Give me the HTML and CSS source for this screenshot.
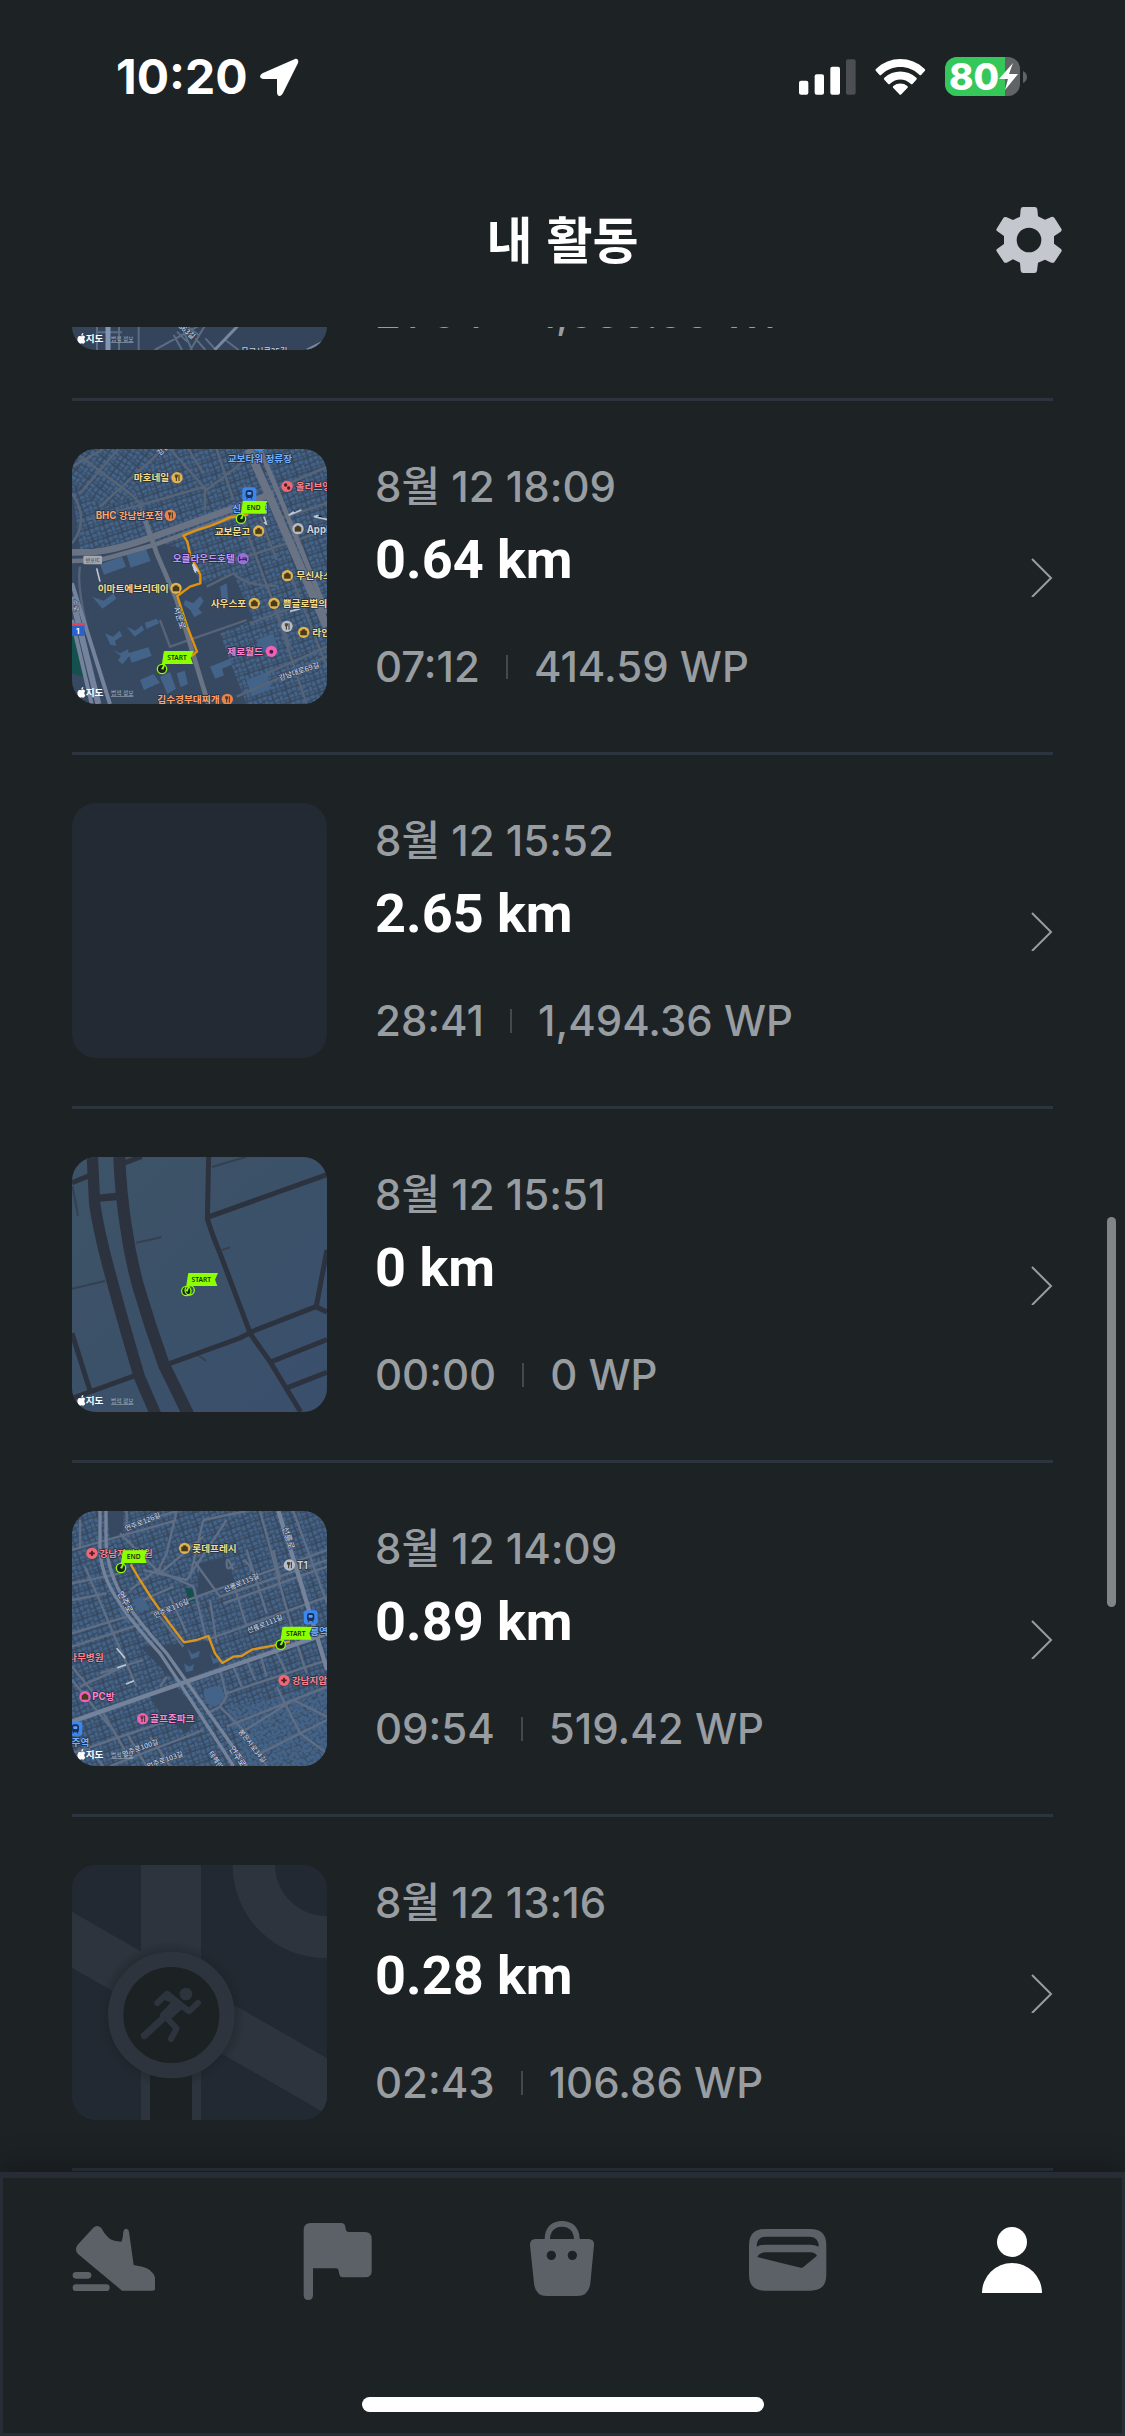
FILE: index.html
```html
<!DOCTYPE html>
<html lang="ko">
<head>
<meta charset="utf-8">
<meta name="viewport" content="width=device-width, initial-scale=1">
<title>내 활동</title>
<link rel="stylesheet" href="styles.css">
</head>
<body>
<svg class="defs" width="0" height="0" aria-hidden="true">
  <defs>
    <pattern id="blocksA" width="46" height="40" patternUnits="userSpaceOnUse" patternTransform="rotate(-18)">
      <path class="bld" d="M2 3h11v13H2zM16 2h14v10H16zM33 4h10v14H33zM3 20h14v9H3zM20 16h9v14h-9zM32 22h12v8H32zM5 32h10v6H5zM19 33h13v5H19zM36 33h7v5h-7z"/>
    </pattern>
    <pattern id="blocksB" width="46" height="40" patternUnits="userSpaceOnUse" patternTransform="rotate(38)">
      <path class="bld" d="M2 3h11v13H2zM16 2h14v10H16zM33 4h10v14H33zM3 20h14v9H3zM20 16h9v14h-9zM32 22h12v8H32zM5 32h10v6H5zM19 33h13v5H19zM36 33h7v5h-7z"/>
    </pattern>
    <linearGradient id="land" x1="0" y1="0" x2="1" y2="1"><stop offset="0" stop-color="#3d5366"/><stop offset="1" stop-color="#3a4f6c"/></linearGradient>
    <radialGradient id="halo"><stop offset="0.78" stop-color="#1b2026" stop-opacity="0.6"/><stop offset="1" stop-color="#1b2026" stop-opacity="0"/></radialGradient>
    <g id="credit">
      <path fill="#fff" d="M29 723c5-3 10 0 10 4-3 4-3 9 1 12-2 7-6 8-11 6-6 2-9 1-12-6-2-8 0-16 6-16 3 0 4 1 6 1zM28 722c0-5 2-7 6-8 0 5-2 7-6 8z"/>
      <text class="credit-name" x="41" y="741">지도</text>
      <text class="credit-legal" x="117" y="739">법적 정보</text>
    </g>
    <g id="pin">
      <path d="M8-53L0 0" stroke="#8cff00" stroke-width="5"/>
      <circle r="14" fill="#1b2124" stroke="#8cff00" stroke-width="4"/>
      <path d="M-3 0L6-15H10L4 2z" fill="#8cff00"/>
    </g>
    <g id="startpin"><use href="#pin"/><path d="M8-54H95L86-34L93-15H3z" fill="#8cff00"/><text class="pin-text" x="45" y="-27">START</text></g>
    <g id="endpin"><use href="#pin"/><path d="M8-53H79L71-34L77-15H3z" fill="#8cff00"/><text class="pin-text" x="38" y="-26">END</text></g>
    <g id="subway"><rect x="-21" y="-21" width="42" height="42" rx="9" fill="#3d86ee"/><rect x="-11" y="-13" width="22" height="24" rx="8" fill="#17325c"/><rect x="-6" y="-7" width="12" height="8" rx="2" fill="#5d9ff5"/><path d="M-8 15L-5 9M8 15L5 9" stroke="#17325c" stroke-width="3"/></g>
    <g id="food"><circle r="17"/><path d="M-5-9v6a3 3 0 0 0 6 0v-6M-2-9V10M6-9V10" fill="none" stroke="#3f3323" stroke-width="3"/></g>
    <g id="shop"><circle r="17"/><path d="M-9-4H9V8H-9zM-4-4v-4h8v4" fill="#4a3a1c" stroke="#4a3a1c" stroke-width="2"/></g>
    <g id="cross"><circle r="17" fill="#ef6874"/><path d="M0-8V8M-8 0H8" stroke="#4c1a22" stroke-width="5"/></g>
  </defs>
</svg>

<header class="status">
  <div class="status-left">
    <span class="clock">10:20</span>
    <svg width="39" height="38" viewBox="0 0 39 38" aria-label="위치"><path d="M35 1L3 15c-4 2-4 6 1 6h13v13c0 5 4 5 6 1L38 5c1-3-1-5-3-4z" fill="#fff"/></svg>
  </div>
  <div class="status-right">
    <svg width="57" height="36" viewBox="57 52 171 108" aria-label="신호"><g fill="#fff"><rect x="57" y="117" width="28" height="42" rx="6"/><rect x="104" y="98" width="28" height="61" rx="6"/><rect x="151" y="75" width="29" height="84" rx="6"/></g><rect x="198" y="53" width="29" height="106" rx="6" fill="#4b4e52"/></svg>
    <svg width="51" height="36" viewBox="285 51 153 108" aria-label="와이파이"><g fill="#fff"><path d="M288 87q-3-3 0-6c41-40 105-40 146 0q3 3 0 6l-10 11q-3 3-6 0c-32-31-82-31-114 0q-3 3-6 0z"/><path d="M313 113q-3-3 0-6c27-25 69-25 96 0q3 3 0 6l-11 12q-3 3-6 0c-18-17-44-17-62 0q-3 3-6 0z"/><path d="M340 138q-3-3 0-6c12-10 30-10 42 0q3 3 0 6l-18 19q-3 3-6 0z"/></g></svg>
    <svg width="82" height="39" viewBox="0 0 82 39" aria-label="배터리"><clipPath id="cell"><rect width="75" height="39" rx="12"/></clipPath><g clip-path="url(#cell)"><path fill="#606467" d="M0 0h75v39H0z"/><path fill="#35c759" d="M0 0h60v39H0z"/></g><path d="M78 14q4 2 4 6t-4 6z" fill="#606467"/><text class="battery" x="4" y="33">80</text><path d="M68 6L54 22h9l-3 11L73 17h-9z" fill="#fff"/></svg>
  </div>
</header>

<div class="titlebar">
  <h1>내 활동</h1>
  <button class="gear" type="button" aria-label="설정">
    <svg width="66" height="66" viewBox="48 51 198 198"><path fill="#c4c7ce" fill-rule="evenodd" d="M129 51H164Q171 51 172 58L174 79L195 89L214 81Q221 79 224 85L244 116Q247 121 242 125L222 139V161L242 176Q247 180 244 185L224 215Q221 220 214 218L195 209L174 218L171 242Q170 249 163 249H130Q123 249 122 242L120 218L99 208L80 218Q74 220 71 215L50 184Q47 179 52 176L72 162V138L52 124Q47 121 50 116L70 84Q73 79 80 82L99 90L120 80L122 58Q123 51 129 51ZM147 113A37 37 0 1 0 147 187A37 37 0 1 0 147 113Z"/></svg>
  </button>
</div>

<main class="feed">
  <ul class="list">
    <li><a class="row" href="#a1">
      <svg class="thumb" viewBox="0 0 765 765"><path fill="#33445b" d="M0 0h765v765H0z"/>
        <g fill="none" stroke="#5c6c82" stroke-width="6"><path d="M75 690V765M200 690V765M141 695V765M78 712H150M248 765L385 690M305 720L330 765M315 710L345 740M335 710L360 765M340 690L380 720M355 765L400 690M370 730L400 765M400 730L432 765M460 735L500 765"/></g>
        <path d="M108 690V765" stroke="#8196b4" stroke-width="15"/><path d="M428 765L500 690M705 765L765 735" stroke="#7687a0" stroke-width="9"/>
        <text class="road" font-size="22" transform="translate(318 695) rotate(42)">363길</text><text class="road" font-size="24" x="508" y="778">무교서로35길</text>
        <use href="#credit"/></svg>
      <div class="info"><p class="date">8<span class="unit">월</span> 12 18:30</p><p class="dist">2.74 km</p><p class="stats"><span>21:54</span><i></i><span>1,536.80 WP</span></p></div>
      <svg class="chev" viewBox="0 0 22 40"><path d="M1 2L20 21L1 40"/></svg></a></li>

    <li><a class="row" href="#a2">
      <svg class="thumb" viewBox="36 27 765 765">
        <path fill="#374960" d="M36 27h765v765H36z"/>
        <path fill="url(#blocksB)" d="M36 27H320L215 170L130 200L36 130z"/>
        <path fill="url(#blocksA)" d="M320 27H801V792H560L470 560L380 330L270 300L60 330L36 130L130 200L215 170z"/>
        <path fill="#374960" d="M60 400L270 310L330 480L400 600L450 792H150L100 600zM400 440L520 400L580 540L430 600z"/>
        <g class="bld"><path d="M120 372l66-22 12 30-66 24zM200 345l58-18 14 36-60 20zM97 470l34 12 30-22 8 16-42 30zM200 560l26 12 20-16 6 14-28 20zM135 580l24 10 20-18 8 16-22 14 4 16-18-4zM205 640l60-18 10 26-60 20zM160 630l20 10 24-12 4 20-20 24-14-10 8-14zM254 548l36-12 8 14-38 16zM375 480l24 10 22-22 10 16-16 22 12 12-24 14-12-22-20-16zM480 440l20-10 6 60-20-8zM450 680l60-24 6 18-30 12 6 20-26 10zM300 710l30-14 18 50-26 16zM350 700l24-8 10 40-22 10zM240 720l40-18 20 26-48 22zM590 600l50-20 12 40-50 20zM560 720l60-24 14 50-60 24z"/></g>
        <path fill="#14504e" d="M36 585L52 600L84 715L36 700z"/>
        <g fill="none" stroke="#566478" stroke-width="7"><path d="M36 80L130 27M36 30L215 165M60 160L175 27M120 200L310 27M215 165L240 190L270 300M80 240L435 140M330 27L440 150L600 27M435 140V210M385 27L430 100M470 27L520 180M620 160L801 80M650 240L801 190M560 350L800 270M440 440L520 400Q560 440 650 437M550 250L690 620M600 230L650 360M620 700L801 620M530 770L801 650M570 550L760 480M620 430L740 792M690 400L801 680M60 380Q50 430 80 560M300 540L330 620L560 540M36 310Q90 240 36 160"/></g>
        <g fill="none" stroke="#697383"><path stroke-width="20" d="M36 337L100 336Q170 330 280 290L520 205L640 160"/><path stroke-width="14" d="M36 363L120 360Q160 350 290 312L560 215"/><path stroke-width="14" d="M245 210L290 340L350 480L445 792"/><path stroke-width="24" d="M565 27L625 160L800 560"/><path stroke-width="14" d="M600 27L655 160L801 520"/></g>
        <g fill="none" stroke="#74829c"><path stroke-width="18" d="M36 470L115 792"/><path stroke-width="12" d="M36 540L95 792M36 430L150 792"/></g>
        <g stroke="#bcc4d0" stroke-width="5"><path d="M724 210L686 226L701 215M801 238L762 230L776 226M110 385L120 425M612 230L620 254L612 246M690 514L720 506"/></g>
        <path d="M565 224Q530 230 510 232L480 246L450 258L410 270L370 287L382 305L392 350L412 385L421 405V430L390 440L352 468L364 505L382 560L411 635L392 650" fill="none" stroke="#e3920c" stroke-width="7" stroke-linejoin="round"/>
        <path d="M400 372l13 20-10-2 4 8-9-23z" fill="#c7cfdd" stroke="#c7cfdd" stroke-width="4"/>
        <g fill="#e0b44e"><use href="#food" x="351" y="113"/><use href="#shop" x="596" y="273"/><use href="#shop" x="348" y="445"/><use href="#shop" x="682" y="407"/><use href="#shop" x="583" y="490"/><use href="#shop" x="642" y="490"/><use href="#shop" x="731" y="577"/></g>
        <g fill="#e8834b"><use href="#food" x="331" y="226"/><use href="#food" x="502" y="778"/></g>
        <g fill="#b8bec8"><use href="#shop" x="714" y="266"/><use href="#food" x="681" y="559"/></g>
        <circle cx="681" cy="139" r="17" fill="#ef6874"/><circle cx="677" cy="135" r="5" fill="#4c1a22"/><circle cx="686" cy="144" r="5" fill="#4c1a22"/>
        <circle cx="634" cy="634" r="17" fill="#f25fb4"/><circle cx="634" cy="635" r="6" fill="#4c1a3c"/>
        <circle cx="549" cy="356" r="17" fill="#9c6fd8"/><path d="M539 349v14m0-4h20v4m0-4v-5h-12" fill="none" stroke="#2c1a4c" stroke-width="3"/>
        <use href="#subway" x="568" y="163"/><path fill="#3d86ee" d="M580 27h34q-4 6-17 6t-17-6z"/>
        <rect x="70" y="347" width="56" height="26" rx="4" fill="#a3a8ae"/><text class="sign" x="98" y="365">반포IC</text>
        <path d="M36 551h38v30q0 7-8 7H36z" fill="#2c62c8"/><path d="M36 549h38v8H36z" fill="#d8475a"/><text class="shield" x="53" y="583">1</text>
        <g class="lbl">
          <text class="c-blue" x="503" y="66">교보타워 정류장</text><text class="c-blue" x="517" y="217">신논현역</text>
          <text class="c-yellow" x="221" y="124">마호네일</text><text class="c-orange" x="107" y="237">BHC 강남반포점</text>
          <text class="c-red" x="707" y="151">올리브영</text><text class="c-yellow" x="464" y="284">교보문고</text><text class="c-gray" x="740" y="278">Apple</text>
          <text class="c-purple" x="338" y="366">오클라우드호텔</text><text class="c-yellow" x="709" y="418">무신사스</text>
          <text class="c-yellow" x="113" y="455">이마트에브리데이</text><text class="c-yellow" x="452" y="500">사우스포</text><text class="c-yellow" x="668" y="500">쁨글로벌의원</text>
          <text class="c-yellow" x="757" y="588">라인</text><text class="c-pink" x="502" y="644">제로월드</text><text class="c-orange" x="292" y="789">김수경부대찌개</text>
        </g>
        <text class="road" font-size="25" transform="translate(340 503) rotate(72)">서운로</text><text class="road" font-size="22" transform="translate(660 722) rotate(-19)">강남대로69길</text><text class="road" font-size="20" transform="translate(36 480) rotate(80)">수로</text><text class="road" font-size="22" transform="translate(300 48) rotate(-45)">강남</text>
        <use href="#endpin" x="543" y="236"/><use href="#startpin" x="306" y="687"/>
        <use href="#credit" x="36" y="27"/></svg>
      <div class="info"><p class="date">8<span class="unit">월</span> 12 18:09</p><p class="dist">0.64 km</p><p class="stats"><span>07:12</span><i></i><span>414.59 WP</span></p></div>
      <svg class="chev" viewBox="0 0 22 40"><path d="M1 2L20 21L1 40"/></svg></a></li>

    <li><a class="row" href="#a3">
      <div class="thumb"></div>
      <div class="info"><p class="date">8<span class="unit">월</span> 12 15:52</p><p class="dist">2.65 km</p><p class="stats"><span>28:41</span><i></i><span>1,494.36 WP</span></p></div>
      <svg class="chev" viewBox="0 0 22 40"><path d="M1 2L20 21L1 40"/></svg></a></li>

    <li><a class="row" href="#a4">
      <svg class="thumb" viewBox="36 51 765 765"><path fill="url(#land)" d="M36 51h765v765H36z"/>
        <g fill="none" stroke="#2d323f" stroke-linejoin="round">
          <path stroke-width="34" d="M97 51L104 190Q115 270 150 400Q190 550 238 710L290 830"/>
          <path stroke-width="36" d="M178 51Q182 160 198 260Q210 350 235 440Q270 560 312 675L388 830"/>
          <path stroke-width="22" d="M112 175L185 168"/>
          <path stroke-width="15" d="M446 51L442 236Q455 280 480 340L572 583L630 665L722 816M442 232L801 104M36 128L90 106M190 70L245 49M320 674L540 594L580 573L768 500L801 516M768 503L801 330M632 666L801 599M683 743L801 697M36 775L225 707M36 580L90 752"/>
          <path stroke-width="6" stroke="#35404f" d="M456 81L560 50M229 308L304 292M483 331L510 322M36 446L135 423M37 138L54 227M417 648L438 662"/>
        </g>
        <use href="#startpin" x="379" y="453"/><circle cx="389" cy="451" r="14" fill="none" stroke="#8cff00" stroke-width="4"/>
        <use href="#credit" x="36" y="51"/></svg>
      <div class="info"><p class="date">8<span class="unit">월</span> 12 15:51</p><p class="dist">0 km</p><p class="stats"><span>00:00</span><i></i><span>0 WP</span></p></div>
      <svg class="chev" viewBox="0 0 22 40"><path d="M1 2L20 21L1 40"/></svg></a></li>

    <li><a class="row" href="#a5">
      <svg class="thumb" viewBox="36 33 765 765">
        <path fill="#374960" d="M36 33h765v765H36z"/><path fill="url(#blocksA)" d="M36 33h765v765H36z"/>
        <path fill="url(#blocksB)" d="M560 798L500 620L801 560V798z"/>
        <path fill="#374960" d="M420 190L500 170L530 260L410 290zM240 440L370 430L450 420L480 500L370 540L330 530zM140 33H190V100L150 120zM270 590L350 560L420 640L380 700L300 640z"/>
        <g class="bld"><path d="M380 440l16 22 24-10-4 18-22 8zM450 460l14 18 18-14v18l-22 10zM372 490l16 10 14-8-4 20-20 4zM430 570l50-16 16 40-30 26-30-10zM216 300l30-12 24 36-30 14zM190 320l24 40-16 10-20-36z"/></g>
        <path fill="#14504e" d="M376 262L400 268L412 300L386 306z"/>
        <g fill="none" stroke="#5f6e84" stroke-width="7"><path d="M36 150L350 60M200 80L350 33L320 160L290 220M36 250L180 220M200 33V90M60 60V140M75 200L160 400L230 560M36 300L140 280M36 400L200 350M36 440L250 370M36 500L110 590M60 560L190 500M120 520L250 480M250 210L380 240L500 60M430 60L390 230M430 60L560 33M180 100L300 220L430 110M210 270L290 210L400 260L440 420M250 300L340 260M270 340L580 230L801 150M300 350L370 440M330 290L380 400M400 180L480 290L801 180M450 300L470 430M520 250L560 380M440 420L801 290M490 310L801 200M560 150L620 340M600 33L700 400L740 520M640 150L660 240M700 33L801 310M520 190Q500 220 500 190T520 210M550 180Q580 200 570 215M520 500L545 560M560 480L585 540M600 460L620 530M500 580L801 480M480 620L500 590L480 510M440 640L480 620L560 700L620 798M500 680L801 560M540 700L700 600L801 650M600 760L801 660M650 560L720 700L801 760M36 690L130 798M130 640L200 760M200 700L260 798M36 760L360 650M150 798L430 690M36 540L150 680M270 710L330 798M640 440L680 520M300 560L320 530"/></g>
        <g fill="none" stroke="#74829a"><path stroke-width="13" d="M36 665L250 590L801 400M655 33L720 240L801 510"/><path stroke-width="10" d="M120 33V120Q115 220 180 310Q210 360 300 460L360 550L520 798"/><path stroke-width="10" d="M138 33V120Q140 220 200 310Q240 370 320 460L380 545L560 798"/></g>
        <path stroke="#c0c8d4" stroke-width="5" d="M170 445L195 475M172 503L198 494M198 552L222 542"/>
        <path d="M212 193L240 240L275 295L330 372L372 427L410 420L445 408L465 460L487 489L520 470L545 468L575 449L640 437L690 424" fill="none" stroke="#dc951b" stroke-width="7" stroke-linejoin="round"/>
        <use href="#cross" x="96" y="160"/><use href="#cross" x="672" y="541"/>
        <g fill="#e0b44e"><use href="#shop" x="374" y="145"/></g><g fill="#b8bec8"><use href="#food" x="688" y="195"/></g><g fill="#f25fb4"><use href="#shop" x="75" y="590"/><use href="#food" x="248" y="656"/></g>
        <use href="#subway" x="752" y="352"/><use href="#subway" x="46" y="686"/>
        <g class="lbl"><text class="c-red" x="118" y="171">강남지성병원</text><text class="c-yellow" x="397" y="156">롯데프레시</text><text class="c-gray" x="711" y="206">T1</text><text class="c-blue" x="724" y="404">선릉역</text><text class="c-red" x="695" y="552">강남지압</text><text class="c-red" x="24" y="483">나무병원</text><text class="c-pink" x="97" y="600">PC방</text><text class="c-pink" x="270" y="666">골프존파크</text><text class="c-blue" x="8" y="738">언주역</text></g>
        <g class="road" font-size="21"><text transform="translate(198 94) rotate(-22)">언주로126길</text><text transform="translate(285 355) rotate(-24)">언주로116길</text><text transform="translate(495 277) rotate(-23)">선릉로115길</text><text transform="translate(565 400) rotate(-22)">선릉로111길</text><text transform="translate(190 770) rotate(-20)">언주로100길</text><text transform="translate(264 806) rotate(-20)">언주로103길</text><text transform="translate(534 695) rotate(52)">봉은사로34길</text><text transform="translate(445 760) rotate(56)">테헤란</text></g>
        <g class="road" font-size="25"><text transform="translate(666 84) rotate(72)">선릉로</text><text transform="translate(172 280) rotate(62)">언주로</text><text transform="translate(506 746) rotate(56)">언주로</text></g>
        <use href="#endpin" x="183" y="204"/><use href="#startpin" x="662" y="434"/>
        <use href="#credit" x="36" y="33"/></svg>
      <div class="info"><p class="date">8<span class="unit">월</span> 12 14:09</p><p class="dist">0.89 km</p><p class="stats"><span>09:54</span><i></i><span>519.42 WP</span></p></div>
      <svg class="chev" viewBox="0 0 22 40"><path d="M1 2L20 21L1 40"/></svg></a></li>

    <li><a class="row" href="#a6">
      <svg class="thumb" viewBox="36 45 765 765"><path fill="#232932" d="M36 45h765v765H36z"/>
        <g fill="#2d343d"><path d="M243 45H423V810H243zM36 185L801 625V793L36 353z"/><path d="M518 45A278 278 0 0 0 801 324V198A155 155 0 0 1 645 45z"/></g>
        <circle cx="334" cy="495" r="222" fill="url(#halo)"/>
        <path fill="#1c2124" d="M270 640H396V810H270z"/>
        <circle cx="334" cy="495" r="167" fill="#1c2124" stroke="#2d343d" stroke-width="46"/>
        <circle cx="378" cy="432" r="19" fill="#2d343d"/>
        <g fill="none" stroke="#2d343d" stroke-linecap="round" stroke-linejoin="round"><path stroke-width="18" d="M292 459L321 431L387 484L414 459M324 508L350 535L333 567"/><path stroke-width="24" d="M342 465L312 497"/><path stroke-width="21" d="M332 484L253 557"/></g><path fill="#2d343d" d="M318 432L374 470L336 505L316 508L300 492L334 458L312 450z"/></svg>
      <div class="info"><p class="date">8<span class="unit">월</span> 12 13:16</p><p class="dist">0.28 km</p><p class="stats"><span>02:43</span><i></i><span>106.86 WP</span></p></div>
      <svg class="chev" viewBox="0 0 22 40"><path d="M1 2L20 21L1 40"/></svg></a></li>
  </ul>
  <div class="scrollbar"></div>
</main>

<nav class="tabs">
  <div class="tabrow">
    <a href="#move" aria-label="운동"><svg viewBox="31 57 252 252"><path d="M98 83Q110 72 122 84Q130 100 142 112Q155 125 182 125Q186 118 188 95Q190 85 197 86Q204 87 205 95L219 195L245 200Q286 208 287 258Q287 272 274 272H184L52 162Q40 149 51 134z"/><rect x="36" y="216" width="56" height="20" rx="10"/><rect x="36" y="253" width="111" height="20" rx="10"/></svg></a>
    <a href="#goal" aria-label="목표"><svg viewBox="706 57 252 252"><path d="M750 69H842Q851 69 853 77L856 90Q857 96 864 96H913Q933 96 933 116V214Q933 232 913 232H846Q838 232 836 223L834 212Q833 205 826 205H757V286Q757 300 743 300Q729 300 729 286V90Q729 69 750 69z"/></svg></a>
    <a href="#shop-tab" aria-label="상점"><svg viewBox="61 57 252 252"><path fill-rule="evenodd" d="M132 117C132 82 154 63 184 63S237 82 237 117H264Q282 118 280 136L269 250Q264 288 230 288H138Q104 288 100 250L88 136Q87 118 104 117zM148 117H220C219 94 206 80 184 80S149 94 148 117zM152 152A14 14 0 1 0 152 180A14 14 0 1 0 152 152zM215 152A14 14 0 1 0 215 180A14 14 0 1 0 215 152z"/></svg></a>
    <a href="#wallet" aria-label="지갑"><svg viewBox="736 57 252 252"><path fill-rule="evenodd" d="M793 87H929Q977 87 977 135V224Q977 272 929 272H793Q745 272 745 224V135Q745 87 793 87zM795 110Q768 111 768 140Q778 134 795 134H928Q944 134 954 140Q954 111 928 110zM794 157Q776 157 770 171L900 203Q905 204 909 200L949 167Q944 158 928 157z"/></svg></a>
    <a class="on" href="#me" aria-label="내 활동" aria-current="page"><svg viewBox="0 0 84 84"><circle cx="41" cy="23" r="15"/><path d="M11 74A30 30 0 0 1 71 74z"/></svg></a>
  </div>
  <div class="home"></div>
</nav>
</body>
</html>
```
FILE: styles.css
```css
* { box-sizing: border-box; }

body {
  margin: 0;
  height: 100vh;
  display: flex;
  flex-direction: column;
  overflow: hidden;
  background: #1d2225;
  color: #fff;
  font-family: Inter, "Noto Sans CJK KR", sans-serif;
}

.defs { position: absolute; }
h1, p, ul { margin: 0; padding: 0; }
a { color: inherit; text-decoration: none; }

/* status bar */
.status {
  flex: none;
  display: flex;
  justify-content: space-between;
  height: 153px;
  padding: 0 98px 0 116px;
}
.status-left, .status-right { display: flex; align-items: center; }
.status-left { gap: 12px; }
.status-right { gap: 19px; }
.clock { font-size: 48px; font-weight: 700; line-height: 58px; }
.battery { font: 800 37px Inter, sans-serif; fill: #fff; }

/* title bar */
.titlebar {
  flex: none;
  display: grid;
  grid-template-columns: 1fr auto 1fr;
  align-items: center;
  height: 174px;
  padding: 0 63px;
}
.titlebar h1 {
  grid-column: 2;
  padding-bottom: 6px;
  font: 700 50px/72px "Noto Sans CJK KR", sans-serif;
}
.gear {
  justify-self: end;
  display: flex;
  padding: 0;
  border: 0;
  background: none;
}

/* activity feed, shown scrolled part-way */
.feed {
  position: relative;
  flex: 1;
  min-height: 0;
  overflow: hidden;
}
.list { list-style: none; margin-top: -280px; padding: 0 72px; }
.row {
  display: flex;
  align-items: center;
  gap: 48px;
  padding: 48px 0;
  border-bottom: 3px solid #2c343d;
}
.thumb {
  flex: none;
  width: 255px;
  height: 255px;
  border-radius: 24px;
  background: #242a33;
  overflow: hidden;
}
.info { flex: 1; }
.date, .stats {
  color: #989da2;
  font-size: 42px;
  font-weight: 550;
  line-height: 50px;
}
.unit { font-weight: 500; }
.dist {
  margin: 16px 0 50px;
  font: 700 54px/64px Roboto, sans-serif;
}
.stats { display: flex; align-items: center; gap: 26px; }
.stats i { width: 2px; height: 24px; background: #44494e; }
.chev {
  flex: none;
  width: 22px;
  height: 40px;
  fill: none;
  stroke: #989da2;
  stroke-width: 2;
}
.scrollbar {
  position: absolute;
  bottom: 565px;
  right: 9px;
  width: 9px;
  height: 390px;
  border-radius: 5px;
  background: #828588;
}

/* map thumbnails */
.bld { fill: #446388; }
.lbl text {
  font: 700 29px Inter, "Noto Sans CJK KR", sans-serif;
  stroke: #253145;
  stroke-width: 4px;
  paint-order: stroke;
}
.c-blue { fill: #6fb0ff; }
.c-yellow { fill: #f5dc86; }
.c-orange { fill: #ffa56b; }
.c-red { fill: #ff8088; }
.c-gray { fill: #cfd3da; }
.c-purple { fill: #c193ff; }
.c-pink { fill: #ff84d0; }
.road {
  fill: #c6d0e0;
  font-family: "Noto Sans CJK KR", sans-serif;
  font-weight: 500;
  stroke: #2c3a50;
  stroke-width: 3px;
  paint-order: stroke;
}
.sign { font: 15px "Noto Sans CJK KR", sans-serif; fill: #33373c; text-anchor: middle; }
.shield { font: 700 24px Inter, sans-serif; fill: #fff; text-anchor: middle; }
.pin-text { font: 600 20px "Noto Sans", sans-serif; fill: #1d3000; text-anchor: middle; }
.credit-name { font: 700 29px "Noto Sans CJK KR", sans-serif; fill: #fff; }
.credit-legal { font: 17px "Noto Sans CJK KR", sans-serif; fill: #a8b0bb; text-decoration: underline; }

/* bottom tabs */
.tabs {
  position: relative;
  flex: none;
  display: flex;
  flex-direction: column;
  align-items: center;
  gap: 94px;
  padding: 44px 0 24px;
  border-top: 3px solid #272c35;
  background: #1d2225;
  box-shadow: inset 0 0 0 3px #272c35, 0 -4px 30px rgba(0, 0, 0, 0.3);
}
.tabrow { display: flex; width: 100%; }
.tabrow a { flex: 1; display: flex; justify-content: center; }
.tabrow svg { width: 84px; height: 84px; fill: #5b6167; }
.tabrow .on svg { fill: #fff; }
.home { width: 402px; height: 15px; border-radius: 8px; background: #fff; }
```
